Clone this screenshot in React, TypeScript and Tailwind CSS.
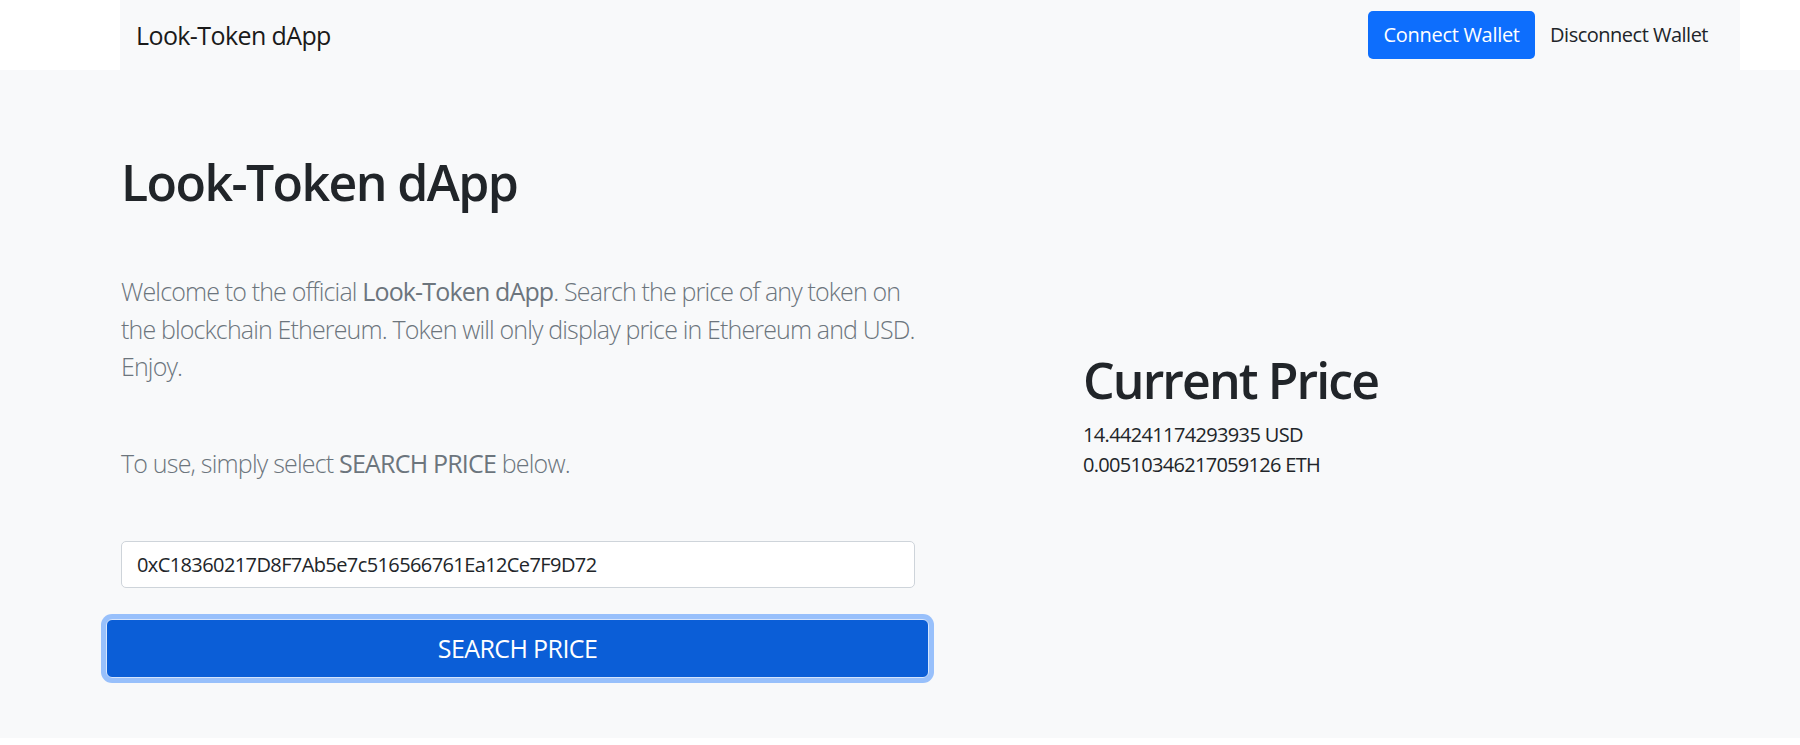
import React from "react";

function Navbar(): JSX.Element {
  return (
    <nav className="ml-[120px] mr-[60px] flex h-[70px] items-center justify-between bg-[#f8f9fa] pl-[16px] pr-[17px]">
      <a className="text-[25px] leading-[37px] tracking-[-0.6px] text-[#1a1a1a]" href="#">
        Look-Token dApp
      </a>
      <div className="flex items-center">
        <button className="flex h-[48px] w-[167px] items-center justify-center rounded-[5px] bg-[#0d6efd] text-[20px] tracking-[-0.3px] text-white">
          Connect Wallet
        </button>
        <button className="flex h-[48px] items-center px-[15px] text-[20px] tracking-[-0.5px] text-[#212529]">
          Disconnect Wallet
        </button>
      </div>
    </nav>
  );
}

export default function App(): JSX.Element {
  return (
    <div className="min-h-screen bg-white font-['Open_Sans',sans-serif] text-[#212529]">
      <Navbar />

      <main className="h-[668px] bg-[#f8f9fa] pl-[121px] pt-[82px]">
        <div className="flex items-center gap-[168px]">
          <div className="w-[794px]">
            <h1 className="mb-[61px] text-[50px] font-semibold leading-[60px] tracking-[-1.6px]">
              Look-Token dApp
            </h1>
            <p className="mb-[59px] whitespace-nowrap text-[25px] font-light leading-[37.5px] tracking-[-0.85px] text-[#6c757d]">
              Welcome to the official <span className="font-normal">Look-Token dApp</span>. Search the price of any token on
              <br />
              the blockchain Ethereum. Token will only display price in Ethereum and USD.
              <br />
              Enjoy.
            </p>
            <p className="mb-[59px] text-[25px] font-light leading-[37.5px] tracking-[-0.8px] text-[#6c757d]">
              To use, simply select <span className="font-normal">SEARCH PRICE</span> below.
            </p>
            <input
              className="block h-[47px] w-[794px] rounded-[5px] border border-[#ced4da] bg-white px-[15px] text-[20px] tracking-[-0.6px] text-[#212529] outline-none"
              defaultValue="0xC18360217D8F7Ab5e7c516566761Ea12Ce7F9D72"
            />
            <button className="ml-[-15px] mt-[31px] block h-[59px] w-[823px] rounded-[6px] border border-[#d6e5fd] bg-[#0b5ed7] text-[25px] tracking-[-0.6px] text-white ring-[5px] ring-[#98c0fb]">
              SEARCH PRICE
            </button>
          </div>

          <div>
            <h1 className="mb-[10px] text-[50px] font-semibold leading-[60px] tracking-[-1.9px]">
              Current Price
            </h1>
            <p className="text-[20px] leading-[30px] tracking-[-0.65px]">14.44241174293935 USD</p>
            <p className="text-[20px] leading-[30px] tracking-[-0.7px]">0.00510346217059126 ETH</p>
          </div>
        </div>
      </main>
    </div>
  );
}
